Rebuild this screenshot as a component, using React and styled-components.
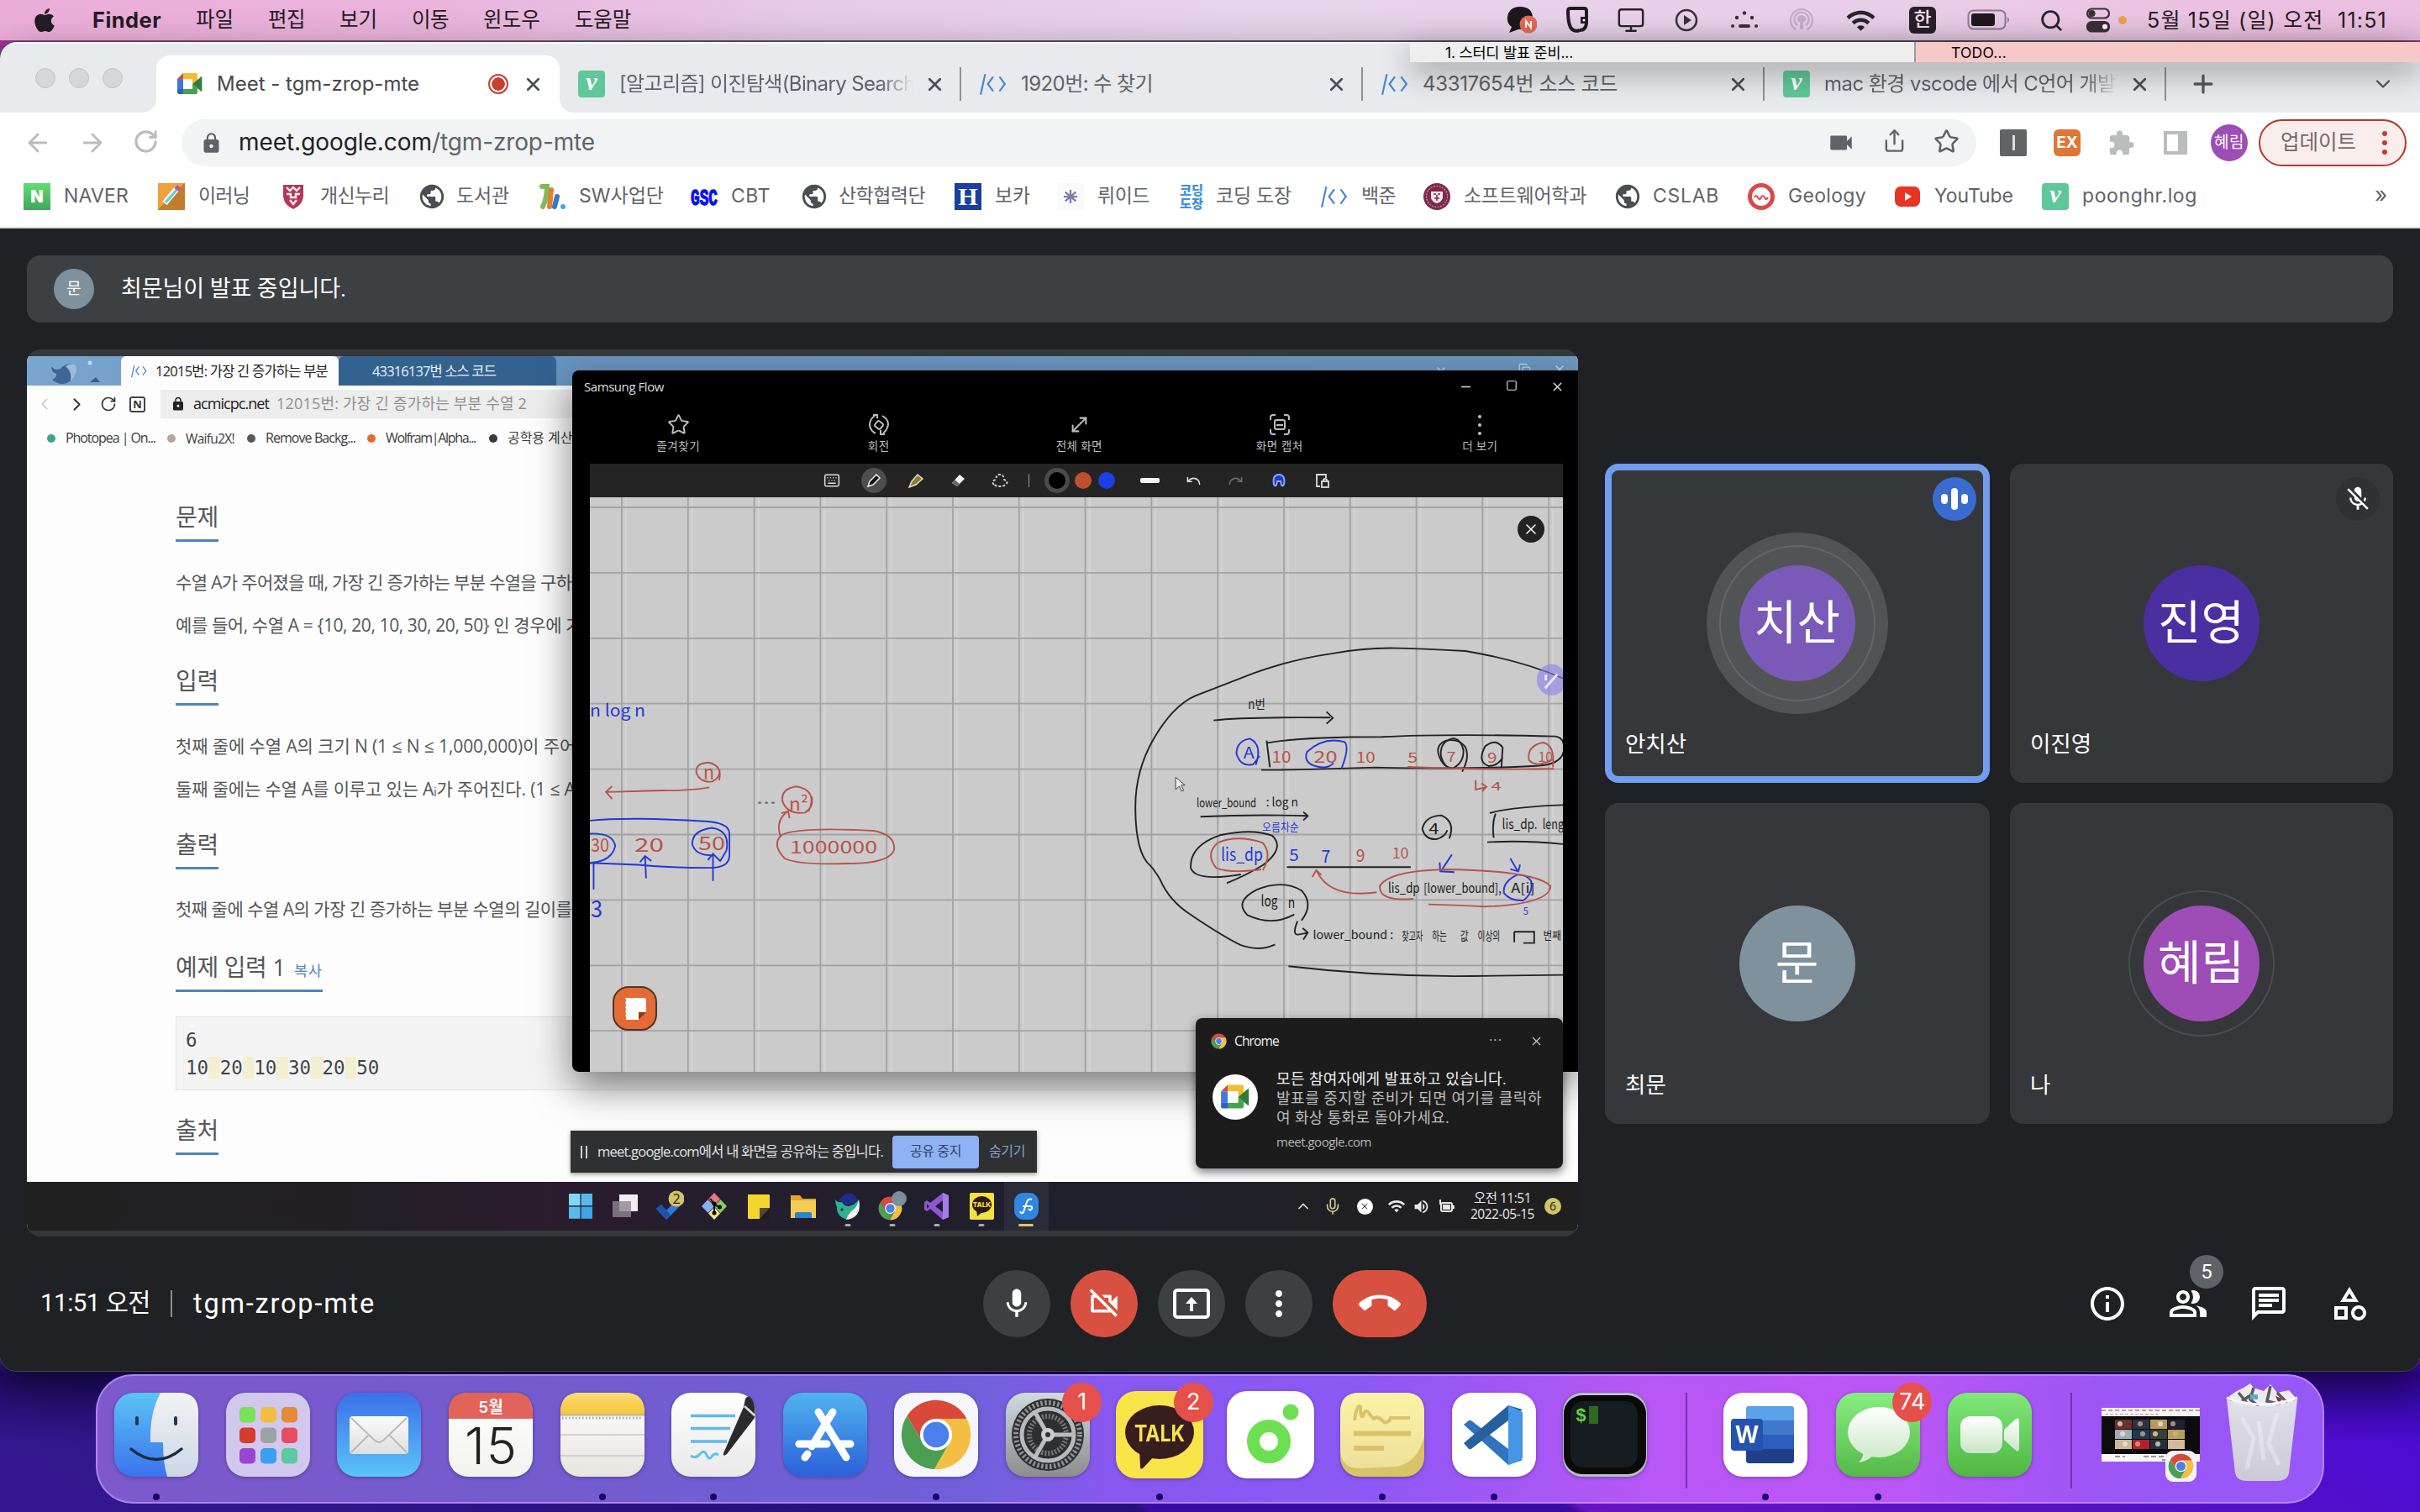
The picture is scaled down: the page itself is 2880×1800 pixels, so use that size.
import React, { useLayoutEffect, useRef, useState } from "react";
import styled, { createGlobalStyle, css } from "styled-components";
import { FaApple } from "react-icons/fa";
import {
  MdMic, MdMicOff, MdOutlineVideocamOff, MdMoreVert, MdCallEnd, MdInfoOutline, MdOutlinePeopleAlt,
  MdOutlineChat, MdOutlineCategory, MdPublic, MdExtension, MdVideocam, MdLock, MdWifi, MdVolumeUp,
} from "react-icons/md";
import {
  ArrowLeft, ArrowRight, RotateCw, Share, Star, Plus, X, ChevronDown, ChevronUp, Search, Monitor,
  ChevronLeft, ChevronRight, Minus, Square, Undo, Redo, Keyboard, Mic, MoveDiagonal, Copy,
} from "lucide-react";

const MAC = `Inter, "Noto Sans CJK KR", sans-serif`;
const MEET = `Roboto, "Noto Sans CJK KR", sans-serif`;
const WIN = `"Open Sans", "Noto Sans CJK KR", sans-serif`;

const Global = createGlobalStyle`
  * { box-sizing: border-box; }
  body { margin: 0; background: #2b1580; font-family: ${MAC}; }
  svg { display: block; flex: none; }
`;

/* ---------- text that keeps a given width by adjusting its tracking ---------- */

const Line = styled.span`
  display: block;
  flex: none;
  white-space: pre;
  line-height: 1.2;
  font-size: ${(p) => p.$s || 24}px;
  font-weight: ${(p) => p.$b || 400};
  color: ${(p) => p.$c || "inherit"};
`;

function Label({ w, s, b, c, children }) {
  const ref = useRef(null);
  const [track, setTrack] = useState(0);
  useLayoutEffect(() => {
    const el = ref.current;
    if (!w || !el) return;
    el.style.letterSpacing = "0px";
    const range = document.createRange();
    range.selectNodeContents(el);
    const natural = range.getBoundingClientRect().width;
    const next = (w - natural) / Math.max(1, el.textContent.length);
    el.style.letterSpacing = `${next}px`;
    setTrack(next);
  }, [w, s]);
  return (
    <Line ref={ref} $s={s} $b={b} $c={c} style={{ width: w, letterSpacing: track }}>
      {children}
    </Line>
  );
}

/* ---------- desktop ---------- */

const Desktop = styled.main`
  position: relative;
  width: 2880px;
  height: 1800px;
  overflow: hidden;
  display: flex;
  flex-direction: column;
  background:
    linear-gradient(180deg, transparent 0 1620px, rgba(10, 0, 50, 0.45) 1634px, transparent 1720px),
    linear-gradient(90deg, #a03098 0 60px, #a03098 60px, #a04058 640px, #5b5b66 700px, #4a4a55 2580px, #7b2a68 2640px, #a02c70 2880px) 0 0 / 100% 80px no-repeat,
    linear-gradient(33.7deg, #341790 0 2%, #26117a 18%, #26117a 24.4%, #3a0da0 24.6%, #3a0da0 33.6%, #6814c0 33.9%, #5612c0 45%, #4a0cd6 55%);
`;

const MenuBar = styled.header`
  height: 48px;
  flex: none;
  display: flex;
  align-items: center;
  justify-content: space-between;
  padding: 0 39px 0 40px;
  color: #241c24;
  background: linear-gradient(90deg, #ecaed9 0, #eab3dc 500px, #e6cae6 950px, #e6d5ea 1500px, #e8d0e8 2200px, #ecc0e0 2700px, #ebbfdf 2880px);
`;
const MenuLeft = styled.div`
  display: flex;
  align-items: center;
  gap: 41px;
  margin-left: -3px;
`;
const MenuRight = styled.div`
  display: flex;
  align-items: center;
`;
const StatusCell = styled.div`
  width: ${(p) => p.$w}px;
  padding-right: ${(p) => p.$pr || 0}px;
  display: flex;
  align-items: center;
  justify-content: center;
  color: #2b232b;
`;
const InputSource = styled.div`
  width: 32px;
  height: 32px;
  border-radius: 6px;
  background: #2a202a;
  color: #f3dff0;
  display: grid;
  place-items: center;
`;

/* ---------- sticky notes above the window ---------- */

const Notes = styled.div`
  position: absolute;
  z-index: 3;
  top: 50px;
  right: 0;
  display: flex;
  gap: 2px;
  background: #9a9a9a;
  box-shadow: 0 12px 36px rgba(0, 0, 0, 0.36);
`;
const Note = styled.div`
  width: 600px;
  height: 24px;
  display: flex;
  align-items: center;
  padding-left: 42px;
  color: #000;
  background: ${(p) => p.$c};
`;

/* ---------- browser ---------- */

const BrowserWindow = styled.section`
  margin-top: 2px;
  height: 1582px;
  flex: none;
  display: flex;
  flex-direction: column;
  border-radius: 20px;
  overflow: hidden;
  background: #202124;
  box-shadow: 0 0 0 1px #444, 0 18px 50px rgba(0, 0, 0, 0.5);
`;
const TabStrip = styled.div`
  height: 84px;
  flex: none;
  display: flex;
  align-items: flex-end;
  background: #e8eaed;
  border-top: 2px solid #f6f7f8;
`;
const Lights = styled.div`
  width: 186px;
  height: 68px;
  flex: none;
  display: flex;
  gap: 16px;
  padding: 15px 0 0 42px;
  i {
    width: 24px;
    height: 24px;
    border-radius: 50%;
    background: #d6d7d9;
    border: 1px solid #c2c3c5;
  }
`;
const Tab = styled.div`
  position: relative;
  width: ${(p) => (p.$active ? 480 : 478)}px;
  height: 68px;
  flex: none;
  display: flex;
  align-items: center;
  padding-left: ${(p) => (p.$active ? 24 : 22)}px;
  color: ${(p) => (p.$active ? "#46494d" : "#5f6368")};
  ${(p) => p.$active && css`
    background: #fff;
    border-radius: 16px 16px 0 0;
    &::before, &::after {
      content: "";
      position: absolute;
      bottom: 0;
      width: 16px;
      height: 16px;
    }
    &::before { left: -16px; background: radial-gradient(circle at 0 0, transparent 15.5px, #fff 16px); }
    &::after { right: -16px; background: radial-gradient(circle at 100% 0, transparent 15.5px, #fff 16px); }
  `}
`;
const TabTitle = styled.div`
  flex: 1;
  margin-left: ${(p) => p.$gap || 17}px;
  overflow: hidden;
  ${(p) => p.$fade && css`mask-image: linear-gradient(90deg, #000 310px, transparent 350px);`}
`;
const RecordDot = styled.div`
  width: 24px;
  height: 24px;
  margin-right: 4px;
  border-radius: 50%;
  border: 2px solid #c9402f;
  background: radial-gradient(circle, #c9402f 7.5px, #fff 8px);
`;
const TabClose = styled.div`
  width: 30px;
  margin: 0 ${(p) => (p.$last ? 17 : 15)}px 0 10px;
  display: grid;
  place-items: center;
  color: #4b4e52;
`;
const TabRule = styled.i`
  width: 2px;
  height: 40px;
  background: #8f9296;
`;
const TabTools = styled.div`
  flex: 1;
  height: 68px;
  display: flex;
  align-items: center;
  justify-content: space-between;
  padding: 0 30px 0 27px;
  color: #55585c;
`;
const VelogTile = styled.div`
  width: 32px;
  height: 32px;
  border-radius: 4px;
  background: #5fc79a;
  color: #fff;
  font: italic bold 30px/26px "Liberation Serif", serif;
  text-align: center;
`;

const ToolbarRow = styled.div`
  height: 70px;
  flex: none;
  display: flex;
  align-items: center;
  padding: 2px 16px 0 28px;
  background: #fff;
`;
const NavButtons = styled.div`
  width: 188px;
  display: flex;
  gap: 31px;
  color: #babcbe;
`;
const Omnibox = styled.div`
  width: 2136px;
  height: 56px;
  display: flex;
  align-items: center;
  padding: 0 20px 0 22px;
  border-radius: 28px;
  background: #f1f3f4;
  color: #5f6368;
`;
const Url = styled.div`
  display: flex;
  flex: 1;
  margin-left: 19px;
`;
const OmniIcons = styled.div`
  display: flex;
  gap: 32px;
`;
const Extensions = styled.div`
  display: flex;
  align-items: center;
  gap: 32px;
  margin-left: 28px;
`;
const ExtTile = styled.div`
  width: 32px;
  height: 32px;
  border-radius: ${(p) => p.$r || 2}px;
  background: ${(p) => p.$c};
  color: #fff;
  display: grid;
  place-items: center;
`;
const ExtCaret = styled.i`
  width: 3px;
  height: 18px;
  background: #ddd;
`;
const SidePanel = styled.div`
  width: 28px;
  height: 28px;
  margin: 0 2px;
  border: 4px solid #babcbe;
  border-right-width: 11px;
`;
const Profile = styled.div`
  width: 44px;
  height: 44px;
  margin: 0 -6px;
  border-radius: 50%;
  background: #9d4db5;
  color: #fff;
  display: grid;
  place-items: center;
`;
const UpdateButton = styled.div`
  width: 176px;
  height: 56px;
  margin-left: 19px;
  flex: none;
  display: flex;
  align-items: center;
  justify-content: space-between;
  padding: 0 13px 0 24px;
  border: 2px solid #b5372c;
  border-radius: 28px;
  background: #faeeed;
  color: #75686a;
`;
const Kebab = styled.div`
  height: 27px;
  display: grid;
  align-content: center;
  gap: ${(p) => p.$gap || 6}px;
  padding-right: ${(p) => p.$pr || 0}px;
  i {
    width: ${(p) => p.$d || 5}px;
    height: ${(p) => p.$d || 5}px;
    border-radius: 50%;
    background: ${(p) => p.$c};
  }
`;

const BookmarkBar = styled.nav`
  height: 68px;
  flex: none;
  display: flex;
  align-items: flex-start;
  padding: 12px 0 0 28px;
  background: #fff;
  border-bottom: 2px solid #d9dbdd;
  color: #5f6368;
`;
const Bookmark = styled.div`
  width: ${(p) => p.$w}px;
  height: 36px;
  display: flex;
  align-items: center;
  gap: ${(p) => p.$gap || 16}px;
`;
const Square32 = styled.div`
  width: 32px;
  height: 32px;
  background: ${(p) => p.$bg};
  color: ${(p) => p.$c || "#fff"};
  display: grid;
  place-items: center;
  font: ${(p) => p.$f || "900 20px/1 Inter, sans-serif"};
`;

/* ---------- meet ---------- */

const Meet = styled.div`
  flex: 1;
  display: flex;
  flex-direction: column;
  padding: 32px 32px 0;
  background: #202124;
  color: #fff;
  font-family: ${MEET};
`;
const Banner = styled.div`
  height: 80px;
  flex: none;
  display: flex;
  align-items: center;
  gap: 32px;
  padding-left: 32px;
  border-radius: 16px;
  background: #3c4043;
`;
const SmallAvatar = styled.div`
  width: 48px;
  height: 48px;
  border-radius: 50%;
  background: #7f919d;
  display: grid;
  place-items: center;
`;
const Stage = styled.div`
  height: 1056px;
  flex: none;
  margin-top: 32px;
  display: flex;
  gap: 32px;
`;
const Presentation = styled.div`
  width: 1846px;
  height: 1056px;
  flex: none;
  padding: 8px 0 7px;
  border-radius: 16px;
  overflow: hidden;
  background: #36373a;
`;
const People = styled.div`
  flex: 1;
  display: grid;
  grid-template-columns: 458px 456px;
  grid-template-rows: 380px 382px;
  gap: 24px;
  padding-top: 136px;
`;
const PersonTile = styled.div`
  position: relative;
  display: grid;
  place-items: center;
  border-radius: 16px;
  background: #36373a;
  box-shadow: ${(p) => (p.$speaking ? "inset 0 0 0 8px #729cef" : "none")};
`;
const Halo = styled.div`
  width: 216px;
  height: 216px;
  border-radius: 50%;
  display: grid;
  place-items: center;
  background: ${(p) => (p.$fill ? "#525355" : "transparent")};
`;
const Ring = styled.div`
  width: ${(p) => p.$d}px;
  height: ${(p) => p.$d}px;
  border-radius: 50%;
  display: grid;
  place-items: center;
  border: 2px solid ${(p) => p.$c};
`;
const Avatar = styled.div`
  width: 138px;
  height: 138px;
  padding: 2px 1px 0 0;
  border-radius: 50%;
  display: grid;
  place-items: center;
  background: ${(p) => p.$c};
`;
const PersonName = styled.div`
  position: absolute;
  left: 24px;
  bottom: 30px;
`;
const CornerBadge = styled.div`
  position: absolute;
  top: 16px;
  right: 16px;
  width: 52px;
  height: 52px;
  border-radius: 50%;
  display: flex;
  align-items: center;
  justify-content: center;
  gap: 4px;
  background: ${(p) => p.$c};
`;
const Bar = styled.i`
  width: 8px;
  height: ${(p) => p.$h}px;
  border-radius: 4px;
  background: #fff;
`;
const ControlBar = styled.footer`
  height: 160px;
  flex: none;
  display: grid;
  grid-template-columns: 1138px 1fr auto;
  align-items: center;
  padding: 0 28px 0 0;
`;
const CallTitle = styled.div`
  display: flex;
  align-items: center;
  padding-left: 16px;
  i { width: 2px; height: 32px; margin: 0 25px 0 24px; background: #8a8c8f; }
`;
const Controls = styled.div`
  display: flex;
  gap: 24px;
`;
const RoundButton = styled.div`
  width: ${(p) => (p.$wide ? 112 : 80)}px;
  height: 80px;
  border-radius: 40px;
  display: grid;
  place-items: center;
  background: ${(p) => (p.$danger ? "#d85140" : "#3c4043")};
`;
const PanelButtons = styled.div`
  display: flex;
  gap: 48px;
`;
const PanelButton = styled.div`
  position: relative;
  width: 48px;
  height: 48px;
`;
const CountBadge = styled.div`
  position: absolute;
  left: 26px;
  top: -34px;
  width: 40px;
  height: 40px;
  border-radius: 50%;
  background: #5f6368;
  display: grid;
  place-items: center;
`;

/* ---------- shared Windows screen ---------- */

const Shared = styled.div`
  position: relative;
  width: 1846px;
  height: 1041px;
  display: flex;
  flex-direction: column;
  overflow: hidden;
  background: #fdfdfd;
  color: #3c3c3c;
  font-family: ${WIN};
`;
const WhaleTabs = styled.div`
  height: 35px;
  display: flex;
  background: linear-gradient(90deg, #79a5cf, #6794bf 30%, #6c98c1);
`;
const WhaleLogo = styled.div`
  width: 112px;
  padding: 4px 0 0 22px;
`;
const WhaleTab = styled.div`
  width: 259px;
  display: flex;
  align-items: center;
  justify-content: ${(p) => (p.$on ? "flex-start" : "center")};
  gap: 10px;
  padding-left: ${(p) => (p.$on ? 12 : 0)}px;
  padding-right: ${(p) => (p.$on ? 0 : 32)}px;
  border-radius: 6px 6px 0 0;
  background: ${(p) => (p.$on ? "#fdfdfd" : "#34628f")};
  color: ${(p) => (p.$on ? "#222" : "#e8eff6")};
`;
const WhaleControls = styled.div`
  flex: 1;
  display: flex;
  justify-content: flex-end;
  align-items: flex-start;
  padding: 8px 14px 0 0;
  color: #c6d8ea;
  svg:first-child { margin-right: 84px; }
  svg:last-child { margin-left: 26px; }
`;
const WhaleBar = styled.div`
  height: 44px;
  display: flex;
  align-items: center;
  gap: 15px;
  padding-left: 10px;
  color: #333;
`;
const WhaleUrl = styled.div`
  flex: 1;
  height: 34px;
  margin-left: 3px;
  padding-left: 12px;
  display: flex;
  align-items: center;
  gap: 9px;
  background: #ededed;
`;
const NBox = styled.div`
  width: 19px;
  height: 19px;
  border: 2px solid #444;
  border-radius: 3px;
  display: grid;
  place-items: center;
`;
const WhaleMarks = styled.div`
  height: 38px;
  display: flex;
  align-items: center;
  padding-left: 24px;
`;
const WhaleMark = styled.div`
  width: ${(p) => p.$w}px;
  flex: none;
  display: flex;
  align-items: center;
  gap: 12px;
  i { width: 10px; height: 10px; border-radius: 50%; background: ${(p) => p.$c}; }
`;
const Article = styled.article`
  flex: 1;
  display: flex;
  flex-direction: column;
  align-items: flex-start;
  padding-left: 177px;
  color: #55575a;
`;
const Heading = styled.h2`
  height: 46px;
  margin: ${(p) => p.$mt}px 0 0;
  display: flex;
  align-items: baseline;
  gap: 10px;
  border-bottom: 3px solid #4a86bf;
`;
const Para = styled.p`
  height: 40px;
  margin: ${(p) => p.$mt}px 0 0;
  display: flex;
  align-items: center;
`;
const Sample = styled.div`
  width: 1640px;
  height: 88px;
  margin-top: 29px;
  padding: 11px 0 0 11px;
  background: #f4f4f5;
  border: 1px solid #e6e3e3;
  color: #444;
  font: 22.5px/33px "DejaVu Sans Mono", monospace;
  div { height: 33px; white-space: pre; }
  mark { background: #f3efcf; color: inherit; }
`;
const WinTaskbar = styled.div`
  height: 58px;
  flex: none;
  display: flex;
  align-items: center;
  justify-content: space-between;
  padding: 0 18px 0 632px;
  color: #fff;
  background: linear-gradient(90deg, #202020 0, #211f24 380px, #2b1c2e 620px, #251e2c 800px, #201f2b 1100px, #1f202c 1300px, #202022 1600px, #1f1f20);
`;
const TaskIcons = styled.div`
  display: flex;
  height: 58px;
`;
const TaskIcon = styled.div`
  position: relative;
  width: 53.1px;
  height: 58px;
  display: grid;
  place-items: center;
  background: ${(p) => (p.$on ? "#2b2b3a" : "transparent")};
  &::after {
    content: "";
    position: absolute;
    bottom: 5px;
    left: 50%;
    width: ${(p) => (p.$run ? (p.$on ? 18 : 7) : 0)}px;
    height: 3px;
    transform: translateX(-50%);
    border-radius: 2px;
    background: ${(p) => (p.$on ? "#d6cb60" : "#a9a9ad")};
  }
`;
const Tray = styled.div`
  display: flex;
  align-items: center;
`;
const TrayCell = styled.div`
  width: ${(p) => p.$w}px;
  display: grid;
  place-items: center;
  color: ${(p) => p.$c || "#e8e8e8"};
`;
const Dot = styled.div`
  width: ${(p) => p.$d}px;
  height: ${(p) => p.$d}px;
  border-radius: 50%;
  background: ${(p) => p.$c};
  border: ${(p) => p.$border || "none"};
  color: #222;
  display: grid;
  place-items: center;
`;

/* Samsung Flow window */
const FlowShadow = styled.div`
  position: absolute;
  left: 649px;
  top: 17px;
  width: 1197px;
  height: 835px;
  border-radius: 8px;
  box-shadow: 0 18px 46px rgba(0, 0, 0, 0.5);
`;
const FlowWindow = styled.div`
  position: absolute;
  left: 649px;
  top: 17px;
  width: 1197px;
  height: 835px;
  display: flex;
  flex-direction: column;
  padding: 0 18px 0 21px;
  overflow: hidden;
  border-radius: 8px 0 0 8px;
  background: #000;
  color: #ddd;
`;
const FlowTitle = styled.div`
  height: 38px;
  margin: 0 -2px 0 -7px;
  display: flex;
  align-items: center;
  justify-content: space-between;
`;
const FlowWinButtons = styled.div`
  display: flex;
  gap: 39px;
`;
const FlowActions = styled.div`
  height: 73px;
  display: flex;
`;
const FlowAction = styled.div`
  width: 238.5px;
  flex: none;
  display: flex;
  flex-direction: column;
  align-items: center;
  gap: 4px;
  padding-top: 13px;
  color: #bdbdbd;
  &:first-child { margin-left: -14px; }
`;
const InkBar = styled.div`
  height: 40px;
  flex: none;
  display: flex;
  align-items: center;
  padding-left: 263px;
  background: #242424;
  color: #e0e0e0;
`;
const InkCell = styled.div`
  width: ${(p) => p.$w || 50}px;
  height: 32px;
  display: grid;
  place-items: center;
  justify-content: center;
  color: ${(p) => p.$c || "#e0e0e0"};
`;
const InkRule = styled.i`
  width: 1px;
  height: 16px;
  background: #999;
`;
const InkStroke = styled.i`
  width: 23px;
  height: 6px;
  border-radius: 2px;
  background: #f4f4f4;
`;
const Canvas = styled.div`
  position: relative;
  flex: 1;
  background: #cbcbcb;
`;
const CloseBubble = styled.div`
  position: absolute;
  right: 22px;
  top: 22px;
  width: 32px;
  height: 32px;
  border-radius: 50%;
  background: #232323;
  color: #fff;
  display: grid;
  place-items: center;
`;
const NotesBubble = styled.div`
  position: absolute;
  left: 27px;
  top: 582px;
  width: 53px;
  height: 53px;
  border-radius: 19px;
  border: 2px solid #4d3823;
  background: #e36b36;
  display: grid;
  place-items: center;
`;

/* overlay bars */
const ShareBar = styled.div`
  position: absolute;
  left: 647px;
  top: 922px;
  width: 555px;
  height: 50px;
  display: flex;
  align-items: center;
  padding: 0 14px 0 12px;
  background: #2f3032;
  color: #e2e2e2;
  box-shadow: 0 2px 5px rgba(0, 0, 0, 0.4);
`;
const PauseMark = styled.i`
  width: 8px;
  height: 15px;
  margin-right: 12px;
  border: solid #d0d0d0;
  border-width: 0 2px;
`;
const StopButton = styled.div`
  width: 104px;
  height: 39px;
  margin: 0 12px 0 11px;
  border-radius: 4px;
  display: grid;
  place-items: center;
  background: #8fb2f3;
  color: #2e4472;
`;
const Toast = styled.div`
  position: absolute;
  left: 1391px;
  top: 788px;
  width: 437px;
  height: 179px;
  display: flex;
  flex-direction: column;
  padding: 14px 23px 0 18px;
  border-radius: 8px;
  background: #1c1c1c;
  color: #f0f0f0;
  box-shadow: 0 4px 12px rgba(0, 0, 0, 0.55);
`;
const ToastHead = styled.div`
  height: 26px;
  display: flex;
  align-items: center;
  gap: 9px;
`;
const ToastActions = styled.div`
  flex: 1;
  display: flex;
  align-items: center;
  justify-content: flex-end;
  gap: 32px;
`;
const ToastBody = styled.div`
  display: flex;
  gap: 22px;
  margin-top: 21px;
`;
const ToastLogo = styled.div`
  width: 54px;
  height: 54px;
  margin: 6px 0 0 2px;
  border-radius: 50%;
  background: #fff;
  display: grid;
  place-items: center;
`;
const ToastText = styled.div`
  display: flex;
  flex-direction: column;
  div { height: 23px; display: flex; align-items: center; }
  div:last-child { margin-top: 5px; }
`;

/* ---------- dock ---------- */

const Dock = styled.div`
  position: absolute;
  left: 114px;
  top: 1636px;
  width: 2652px;
  height: 154px;
  display: flex;
  padding: 20px 0 0 20px;
  border-radius: 44px;
  border: 2px solid rgba(210, 170, 255, 0.55);
  background: linear-gradient(90deg, #7d59cc 0, #735bcd 500px, #7060da 1050px, #8858f0 1200px, #8b58f4 1500px, #b857f5 1850px, #ba56f6 2150px, #9a56f6 2400px, #9658f7 2650px);
`;
const DockItem = styled.div`
  position: relative;
  width: 100px;
  height: 130px;
  margin-right: ${(p) => p.$mr ?? 32.65}px;
  flex: none;
  &::after {
    content: "";
    position: absolute;
    left: 46px;
    top: 120px;
    width: 8px;
    height: 8px;
    border-radius: 50%;
    background: ${(p) => (p.$open ? "#1c0268" : "transparent")};
  }
  > svg { overflow: visible; filter: drop-shadow(0 1px 2px rgba(0, 0, 0, 0.3)); }
`;
const DockRule = styled.i`
  width: 2px;
  height: 114px;
  margin-right: ${(p) => p.$mr}px;
  background: rgba(80, 20, 150, 0.6);
`;
const DockBadge = styled.div`
  position: absolute;
  right: -14px;
  top: -12px;
  width: 47px;
  height: 47px;
  border-radius: 50%;
  background: #e6504a;
  color: #fff;
  display: grid;
  place-items: center;
`;
const Thumb = styled.div`
  width: 117px;
  height: 100px;
  padding-top: 18px;
  margin: 0 30px 0 35px;
`;

/* ---------- drawings ---------- */

function ChromeLogo({ size }) {
  const d = "M24 14H43.6A22 22 0 0 0 5.54 12.03L15.34 29L24 24Z";
  return (
    <svg width={size} height={size} viewBox="1 1 46 46">
      <path d={d} fill="#d9493a" />
      <path d={d} fill="#f3bf42" transform="rotate(120 24 24)" />
      <path d={d} fill="#4c9e52" transform="rotate(240 24 24)" />
      <circle cx="24" cy="24" r="10.2" fill="#fff" />
      <circle cx="24" cy="24" r="8.2" fill="#4a80ec" />
    </svg>
  );
}
function MeetLogo({ size }) {
  return (
    <svg width={size} height={size} viewBox="0 0 32 32">
      <path d="M1 10L8 3V10Z" fill="#d9493a" />
      <path d="M8 3H23a2 2 0 0 1 2 2V12l-6 4V10H8Z" fill="#f3bb2f" />
      <path d="M1 10H8V22H1Z" fill="#4077e3" />
      <path d="M1 22H8V28H3a2 2 0 0 1-2-2Z" fill="#2c5fc4" />
      <path d="M8 22H19V16l6 5V26a2 2 0 0 1-2 2H8Z" fill="#46a350" />
      <path d="M8 10H19V22H8Z" fill="#fff" />
      <path d="M25 11L29 7.500a.8.8 0 0 1 1.400.6V23.900a.8.8 0 0 1-1.400.6L25 21L19 16Z" fill="#2f7d3a" />
    </svg>
  );
}
const CodeMark = ({ size = 30 }) => (
  <svg width={size} height={size} viewBox="0 0 30 30" fill="none" stroke="#4a86cc" strokeWidth="2">
    <path d="M6 4L1 27M15 7L9 15L15 23M22 7L28 15L22 23" />
  </svg>
);

const bookmarks = [
  { t: "NAVER", w: 77, p: 160, i: <Square32 $bg="linear-gradient(#5ee070,#43a35f)">N</Square32> },
  { t: "이러닝", w: 61, p: 145, i: (
    <Square32 $bg="linear-gradient(135deg,#f0a03c 50%,#c07d2c 50%)">
      <svg width="28" height="28" viewBox="0 0 28 28"><path d="M6 22L20 5" stroke="#e8fbff" strokeWidth="7" /><path d="M7 21L21 5" stroke="#6fc7d9" strokeWidth="3" /><path d="M20 6l3-4" stroke="#a55bb5" strokeWidth="6" /></svg>
    </Square32>) },
  { t: "개신누리", w: 82, p: 164, i: (
    <svg width="32" height="32" viewBox="0 0 32 32"><path d="M4 2H28V16Q27 26 16 31Q5 26 4 16Z" fill="#b2375a" /><path d="M8 5l4 4 4-4 4 4 4-4M8 13h5v4h6v-4h5M12 20l4 5 4-5" stroke="#fbe9ee" strokeWidth="2.400" fill="none" /></svg>) },
  { t: "도서관", w: 63, p: 144, i: <MdPublic size={34} color="#4a4d52" />, g: 12 },
  { t: "SW사업단", w: 101, p: 181, i: (
    <svg width="32" height="32" viewBox="0 0 32 32" strokeLinecap="round" strokeWidth="6"><path d="M4 4h6q0 14-5 24" stroke="#7fbc55" fill="none" /><path d="M15 8l-2 20" stroke="#e57e35" /><path d="M22 16l-3 12" stroke="#3b78c2" /><circle cx="29" cy="28" r="3" fill="#43a6e0" /></svg>) },
  { t: "CBT", w: 47, p: 130, i: (
    <svg width="32" height="32" viewBox="0 0 32 32"><text transform="translate(0 26) scale(1 1.700)" fontSize="16" fontWeight="700" fontFamily="'Liberation Mono', monospace" fill="#0b12ee" stroke="#0b12ee" strokeWidth=".8" textLength="32" lengthAdjust="spacingAndGlyphs">GSC</text></svg>) },
  { t: "산학협력단", w: 103, p: 184, i: <MdPublic size={34} color="#4a4d52" />, g: 12 },
  { t: "보카", w: 42, p: 122, i: <Square32 $bg="#1b3f9e" $f="bold 30px/1 'Liberation Serif', serif">H</Square32> },
  { t: "뤼이드", w: 62, p: 144, i: (
    <Square32 $bg="#fafafd"><svg width="18" height="18" viewBox="0 0 20 20" stroke="#7a80aa" strokeWidth="2.500"><path d="M10 1V19M3 4L17 16M3 16L17 4M1 10H19" /></svg></Square32>) },
  { t: "코딩 도장", w: 90, p: 170, i: (
    <svg width="32" height="32" viewBox="0 0 32 32" fontSize="15" fontWeight="900" fontFamily="'Noto Sans CJK KR', sans-serif" fill="#3f93d8"><text x="2" y="14" textLength="28" lengthAdjust="spacingAndGlyphs">코딩</text><text x="2" y="30" textLength="28" lengthAdjust="spacingAndGlyphs">도장</text></svg>), g: 13 },
  { t: "백준", w: 41, p: 122, i: <CodeMark size={32} /> },
  { t: "소프트웨어학과", w: 146, p: 226, i: (
    <svg width="32" height="32" viewBox="0 0 32 32"><circle cx="16" cy="16" r="16" fill="#7d2a4b" /><circle cx="16" cy="16" r="12.500" fill="none" stroke="#c793a7" strokeWidth="1.200" strokeDasharray="2 1.400" /><path d="M9 10h14v8q-2 5-7 6q-5-1-7-6Z" fill="#f6e8ee" /><path d="M12 13h3M17 13h3M13 18h6M16 14v7" stroke="#7d2a4b" strokeWidth="1.600" /></svg>) },
  { t: "CSLAB", w: 79, p: 160, i: <MdPublic size={34} color="#4a4d52" />, g: 13 },
  { t: "Geology", w: 93, p: 174, i: (
    <svg width="32" height="32" viewBox="0 0 32 32"><circle cx="16" cy="16" r="13.500" fill="#fff" stroke="#dc4747" strokeWidth="5" /><path d="M8 17q2-4 4 0t4 0t4 0t4 0" stroke="#dc4747" strokeWidth="2" fill="none" /></svg>) },
  { t: "YouTube", w: 94, p: 176, i: (
    <svg width="32" height="32" viewBox="0 0 32 32"><rect x="1" y="4" width="30" height="24" rx="7" fill="#e93323" /><path d="M13 11V21L21 16Z" fill="#fff" /></svg>) },
  { t: "poonghr.log", w: 137, p: 396, i: <VelogTile>v</VelogTile> },
];

/* Handwriting on the shared note; coordinates follow the page of the note. */
const hand = `"Noto Sans CJK KR", sans-serif`;
function Ink({ x, y, w, s, c = "#1c1c1c", children }) {
  return (
    <text x={x} y={y} fontSize={s} fill={c} textLength={w} lengthAdjust="spacingAndGlyphs" fontFamily={hand}>
      {children}
    </text>
  );
}
const Stroke = (props) => <path vectorEffect="non-scaling-stroke" {...props} />;
const BLUE = "#2338d6";
const RED = "#b9534b";
function NotePage() {
  const vs = Array.from({ length: 15 }, (_, i) => 740 + i * 78.8);
  const hs = Array.from({ length: 9 }, (_, i) => 604 + i * 77.9);
  return (
    <svg width="1158" height="684" viewBox="702 592 1158 684">
      <g stroke="#d3d3d3" strokeWidth="2">
        {vs.map((v) => <path key={v} d={`M${v + 5} 592V1276`} />)}
      </g>
      <g stroke="#a3a3a3" strokeWidth="1.800">
        {vs.map((v) => <path key={v} d={`M${v} 592V1276`} />)}
        {hs.map((h) => <path key={h} d={`M702 ${h}H1860`} />)}
      </g>
      <g transform="translate(0 900) scale(.6122 .3699)" fill="none" strokeWidth="1.900">
        <g stroke={RED}>
          <Stroke d="M1398 78Q1405 30 1377 21Q1350 24 1354 56Q1362 88 1385 82Q1400 70 1399 45" />
          <Stroke d="M1379 101Q1340 112 1290 111L1180 116M1190 97L1178 116L1190 138" />
          <Stroke d="M1572 178Q1590 110 1548 98Q1518 105 1521 145Q1530 190 1565 182Q1582 165 1578 130" />
          <Stroke d="M1518 262Q1506 210 1530 180M1519 184L1532 178L1535 200" />
        </g>
        <g stroke={BLUE}>
          <Stroke d="M1146 208Q1220 195 1370 210Q1418 214 1418 250V320Q1418 360 1380 360Q1300 360 1240 350L1146 344" />
          <Stroke d="M1146 250Q1192 246 1196 290Q1190 338 1146 345" />
          <Stroke d="M1412 305Q1420 240 1384 231Q1344 240 1346 285Q1352 320 1386 320" />
          <Stroke d="M1154 340V430M1256 394L1254 325M1244 342L1254 322L1266 338M1386 402V318M1376 335L1386 315L1400 338L1412 305" />
        </g>
      </g>
      <Ink x="702" y="853" w="66" s="20" c={BLUE}>n log n</Ink>
      <Ink x="837" y="928" w="13" s="23" c={RED}>n</Ink>
      <Ink x="703" y="1014" w="22" s="22" c={RED}>30</Ink>
      <Ink x="755" y="1014" w="35" s="22" c={RED}>20</Ink>
      <Ink x="831" y="1012" w="32" s="22" c={RED}>50</Ink>
      <Ink x="703" y="1092" w="14" s="28" c={BLUE}>3</Ink>
      <Ink x="900" y="957" w="24" s="20" c="#777">...</Ink>
      <Ink x="939" y="965" w="23" s="22" c={RED}>n²</Ink>
      <path d="M930 994Q950 984 1040 989Q1066 994 1064 1012Q1058 1028 1010 1028Q950 1030 934 1022Q918 1006 930 994Z" fill="none" stroke={RED} strokeWidth="1.900" />
      <Ink x="940" y="1016" w="104" s="21" c={RED}>1000000</Ink>

      <g transform="translate(1300 740) scale(.3827 .3333)" fill="none" strokeWidth="1.900">
        <g stroke="#222">
          <Stroke d="M1466 204Q1340 140 1160 105Q1040 98 950 95Q850 92 740 115Q620 135 500 185L320 265Q250 300 190 420Q130 540 134 680Q136 810 170 860Q190 880 210 920Q240 1000 310 1050Q400 1120 460 1155Q520 1180 568 1153" />
          <Stroke d="M377 353Q470 340 740 343M728 322L748 344L728 365" />
          <Stroke d="M542 425L552 520M542 434Q640 412 900 412Q1100 400 1440 410Q1470 415 1466 460Q1460 515 1370 516Q1180 528 880 521Q640 530 525 530" />
          <Stroke d="M1118 418Q1080 430 1084 480Q1095 525 1120 525Q1155 505 1154 460Q1145 415 1118 418" />
          <Stroke d="M1150 536Q1176 480 1158 445Q1140 418 1100 425Q1066 440 1078 480Q1090 520 1118 524" />
          <Stroke d="M1272 522L1276 450Q1255 415 1222 445Q1195 500 1232 516Q1260 516 1276 485" />
          <Stroke d="M336 697Q500 688 668 694M656 680L670 694L656 710" />
          <Stroke d="M462 903Q320 930 306 880Q302 800 400 762Q500 738 560 765Q600 810 530 870Q480 905 418 934" />
          <Stroke d="M605 877H990" />
          <Stroke d="M1110 775Q1130 715 1085 692Q1035 695 1026 740Q1035 780 1070 777Q1095 770 1104 745" />
          <Stroke d="M1466 655Q1300 662 1236 684M1254 686Q1242 720 1248 772M1228 788Q1340 780 1466 795" />
          <Stroke d="M650 1068Q690 1010 650 960Q590 920 510 958Q440 1000 482 1048Q560 1090 628 1046" />
          <Stroke d="M638 1070Q620 1120 640 1118L668 1112M654 1095L670 1111L656 1136" />
          <Stroke d="M610 1231Q900 1270 1180 1266L1466 1262M1312 1108V1145M1312 1108H1374V1148H1340" />
        </g>
        <g stroke={BLUE}>
          <Stroke d="M508 512Q530 440 490 418Q450 425 448 470Q460 520 500 510L520 480" />
          <Stroke d="M775 524Q800 450 785 430Q720 410 668 465Q655 500 690 515Q730 530 750 505" />
          <Stroke d="M1118 832L1085 890M1080 860L1082 892L1126 895M1300 846L1322 890M1300 884L1325 892L1330 868" />
          <Stroke d="M1320 905Q1275 930 1280 970Q1300 998 1340 996Q1372 970 1364 925Q1345 900 1320 905" />
        </g>
        <g stroke={RED}>
          <Stroke d="M530 888Q560 830 530 790Q450 760 390 790Q350 830 385 880Q430 900 525 885" />
          <Stroke d="M1432 520Q1440 440 1400 432Q1350 445 1358 495Q1380 525 1435 490M980 519Q1250 530 1435 526M1192 566V600L1222 592M1210 578L1226 590L1212 606" />
          <Stroke d="M884 967Q740 990 698 892M684 912L696 888L712 905" />
          <Stroke d="M998 990Q890 1000 894 945Q920 890 1100 885Q1380 890 1425 945Q1420 1010 1220 1018Q1120 1012 1045 1010" />
        </g>
        <g>
          <Ink x="484" y="312" w="54" s="46">n번</Ink>
          <Ink x="470" y="488" w="34" s="54" c={BLUE}>A</Ink>
          <Ink x="558" y="505" w="60" s="58" c={RED}>10</Ink>
          <Ink x="688" y="505" w="74" s="58" c={RED}>20</Ink>
          <Ink x="820" y="505" w="60" s="54" c={RED}>10</Ink>
          <Ink x="980" y="503" w="32" s="50" c={RED}>5</Ink>
          <Ink x="1102" y="502" w="28" s="50" c={RED}>7</Ink>
          <Ink x="1228" y="504" w="30" s="50" c={RED}>9</Ink>
          <Ink x="1386" y="500" w="46" s="50" c={RED}>10</Ink>
          <Ink x="1240" y="604" w="32" s="42" c={RED}>4</Ink>
          <Ink x="324" y="662" w="186" s="44">lower_bound</Ink>
          <Ink x="540" y="660" w="100" s="44">: log n</Ink>
          <Ink x="528" y="746" w="114" s="38" c={BLUE}>오름차순</Ink>
          <Ink x="400" y="856" w="130" s="64" c={BLUE}>lis_dp</Ink>
          <Ink x="612" y="854" w="30" s="58" c={BLUE}>5</Ink>
          <Ink x="712" y="860" w="28" s="62" c={BLUE}>7</Ink>
          <Ink x="820" y="858" w="28" s="60" c={RED}>9</Ink>
          <Ink x="932" y="846" w="52" s="54" c={RED}>10</Ink>
          <Ink x="1046" y="760" w="32" s="52">4</Ink>
          <Ink x="1274" y="742" w="110" s="50">lis_dp.</Ink>
          <Ink x="1400" y="742" w="66" s="50">leng</Ink>
          <Ink x="920" y="968" w="98" s="50">lis_dp</Ink>
          <Ink x="1030" y="968" w="242" s="46">[lower_bound],</Ink>
          <Ink x="1302" y="970" w="74" s="46">A[i]</Ink>
          <Ink x="1340" y="1046" w="16" s="36" c={BLUE}>5</Ink>
          <Ink x="524" y="1018" w="52" s="54">log</Ink>
          <Ink x="608" y="1022" w="22" s="54">n</Ink>
          <Ink x="686" y="1134" w="250" s="42">lower_bound  :</Ink>
          <Ink x="962" y="1136" w="66" s="40">찾고자</Ink>
          <Ink x="1056" y="1136" w="46" s="40">하는</Ink>
          <Ink x="1144" y="1136" w="26" s="40">값</Ink>
          <Ink x="1198" y="1136" w="70" s="40">이상의</Ink>
          <Ink x="1402" y="1134" w="56" s="38">번째</Ink>
        </g>
        <ellipse cx="1428" cy="208" rx="46" ry="56" fill="#8a80ec" fillOpacity=".6" />
        <Stroke d="M1408 238L1446 188M1410 190V210" stroke="#e8e6fb" strokeWidth="3" />
        <Stroke d="M259 556V600L270 588L278 606L284 603L276 584H288Z" fill="#f2f2f2" stroke="#444" strokeWidth="1" />
      </g>
    </svg>
  );
}

const winIcons = [
  { i: <svg width="28" height="30" viewBox="0 0 28 30"><g fill="#58b9ec"><rect width="13.4" height="14.2" fill="#7fd6f5" /><rect x="14.6" width="13.4" height="14.2" /><rect y="15.6" width="13.4" height="14.2" /><rect x="14.6" y="15.6" width="13.4" height="14.2" fill="#3fa4e6" /></g></svg> },
  { i: <svg width="30" height="28" viewBox="0 0 30 28"><rect x="8" width="22" height="20" fill="#f1edf2" /><rect y="8" width="22" height="19" fill="#8d8790" fillOpacity=".8" /></svg> },
  { i: <svg width="34" height="38" viewBox="0 0 34 38"><path d="M1 22L7 17L13 24L24 12L30 18L13 35Z" fill="#2f78d6" /><path d="M1 22L7 17L18 29L13 35Z" fill="#1d54a8" /><circle cx="25" cy="10" r="9.500" fill="#d3c468" /><text x="25" y="16" fontSize="16" textAnchor="middle" fill="#222" fontFamily="Open Sans">2</text></svg> },
  { i: <svg width="30" height="32" viewBox="0 0 30 32"><path d="M15 0L22 7.500L15 15L8 7.500Z" fill="#ee7480" /><path d="M22.500 8L30 16L22.500 24L15 16Z" fill="#84cf62" /><path d="M7.500 8L15 16L7.500 24L0 16Z" fill="#86b2ee" /><path d="M15 17L22 24.500L15 32L8 24.500Z" fill="#f3e58f" /><path d="M10 7L15 13V24M15 14L21 17" stroke="#111" strokeWidth="2" fill="none" /><circle cx="15" cy="13" r="2.500" /><circle cx="15" cy="24" r="2.500" /><circle cx="21.500" cy="17" r="2.500" /></svg> },
  { i: <svg width="26" height="29" viewBox="0 0 26 29"><rect width="26" height="29" rx="1" fill="#f4d52e" /><path d="M14 29V16H26V29Z" fill="#1f1d22" /><path d="M14 29V16H26Z" fill="#4f4a33" /></svg> },
  { i: <svg width="30" height="30" viewBox="0 0 30 30"><path d="M0 2H11L14 6H30V28H0Z" fill="#e2a52f" /><path d="M0 8H30V29H0Z" fill="#f6cb55" /><path d="M5 29V24q0-2 2-2H23q2 0 2 2V29Z" fill="#2b83d0" /></svg> },
  { run: 1, i: <svg width="30" height="32" viewBox="0 0 30 32"><path d="M4 9Q10-1 20 1Q27 4 26 11L14 15Z" fill="#1b2f8a" /><path d="M0 8Q3 12 8 11Q12 18 19 15Q25 13 28 8Q33 28 14 32Q1 28 2 17Q0 13 0 8Z" fill="#2fae92" /><path d="M28 8Q26 18 19 22Q15 26 13 32Q32 30 28 8Z" fill="#eef4f2" /><circle cx="8" cy="20" r="1.500" fill="#123" /></svg> },
  { run: 1, i: <svg width="34" height="36" viewBox="0 0 34 36"><g transform="translate(0 6)"><ChromeLogo size={29} /></g><circle cx="25" cy="9" r="9" fill="#78909c" /></svg> },
  { run: 1, i: <svg width="30" height="32" viewBox="0 0 30 32"><path d="M22 0L29 3V29L22 32L7 19L3 22L0 20V11L3 9L7 12ZM22 9L13 16L22 23ZM3 13V19L6 16Z" fill="#8c58d2" fillRule="evenodd" /><path d="M22 0L29 3V29L22 32Z" fill="#a67bea" /></svg> },
  { run: 1, i: <svg width="29" height="32" viewBox="0 0 29 32"><rect width="29" height="32" rx="2" fill="#f7e13f" /><ellipse cx="14.500" cy="14" rx="11.500" ry="10" fill="#2d1a12" /><path d="M8 20L9 28L16 22Z" fill="#2d1a12" /><text x="14.500" y="17" fontSize="8" fontWeight="800" textAnchor="middle" fill="#f7e13f" fontFamily="Inter">TALK</text></svg> },
  { run: 1, on: 1, i: <svg width="29" height="32" viewBox="0 0 29 32"><rect width="29" height="32" rx="11" fill="#2f86e0" /><path d="M7 22q1 4 4 1l4-12q2-5 6-3M10 16h9q3 0 2 3q-2 3-4 0" stroke="#fff" strokeWidth="2" fill="none" /></svg> },
];

function SharedScreen() {
  return (
    <Shared>
      <WhaleTabs>
        <WhaleLogo>
          <svg width="80" height="31" viewBox="0 0 80 31"><path d="M7 8Q12 14 18 11Q24 4 33 6Q40 14 32 24Q20 34 8 24Q14 22 13 17Q7 15 7 8Z" fill="#3c6696" /><path d="M24 8Q30 4 36 7Q40 16 30 26Q32 14 24 8Z" fill="#9cbbd8" /><circle cx="53" cy="4" r="2.500" fill="#c4d9ec" /><path d="M53 27l7-6 5 6Z" fill="#345f8f" /></svg>
        </WhaleLogo>
        <WhaleTab $on>
          <CodeMark size={19} />
          <Label s={16.500} w={205}>12015번: 가장 긴 증가하는 부분</Label>
        </WhaleTab>
        <WhaleTab><Label s={16.500} w={147}>43316137번 소스 코드</Label></WhaleTab>
        <WhaleControls><ChevronDown size={16} /><Copy size={15} /><X size={16} /></WhaleControls>
      </WhaleTabs>
      <WhaleBar>
        <ChevronLeft size={22} color="#c2c2c2" strokeWidth={1.600} />
        <ChevronRight size={25} strokeWidth={1.800} />
        <RotateCw size={20} strokeWidth={2} />
        <NBox><Label s={13} b={700}>N</Label></NBox>
        <WhaleUrl>
          <MdLock size={18} color="#222" />
          <Label s={18} w={90} c="#222">acmicpc.net</Label>
          <Label s={18} w={298} c="#909090">12015번: 가장 긴 증가하는 부분 수열 2</Label>
        </WhaleUrl>
      </WhaleBar>
      <WhaleMarks>
        <WhaleMark $w={143} $c="#3aa487"><i /><Label s={16} w={107}>Photopea | On...</Label></WhaleMark>
        <WhaleMark $w={95} $c="#b5a99b"><i /><Label s={15.500} w={58}>Waifu2X!</Label></WhaleMark>
        <WhaleMark $w={143} $c="#55585c"><i /><Label s={16} w={107}>Remove Backg...</Label></WhaleMark>
        <WhaleMark $w={145} $c="#e8692c"><i /><Label s={16} w={107}>Wolfram|Alpha...</Label></WhaleMark>
        <WhaleMark $w={145} $c="#3a3a3a"><i /><Label s={16} w={92}>공학용 계산기</Label></WhaleMark>
      </WhaleMarks>
      <Article>
        <Heading $mt={58}><Label s={28} w={51}>문제</Label></Heading>
        <Para $mt={29}><Label s={21} w={490}>수열 A가 주어졌을 때, 가장 긴 증가하는 부분 수열을 구하는</Label></Para>
        <Para $mt={11}><Label s={21} w={502}>예를 들어, 수열 A = {"{10, 20, 10, 30, 20, 50}"} 인 경우에 가장</Label></Para>
        <Heading $mt={29}><Label s={28} w={51}>입력</Label></Heading>
        <Para $mt={29}><Label s={21} w={520}>첫째 줄에 수열 A의 크기 N (1 ≤ N ≤ 1,000,000)이 주어진다.</Label></Para>
        <Para $mt={11}><Label s={21} w={496}>둘째 줄에는 수열 A를 이루고 있는 Aᵢ가 주어진다. (1 ≤ Aᵢ ≤</Label></Para>
        <Heading $mt={29}><Label s={28} w={51}>출력</Label></Heading>
        <Para $mt={28}><Label s={21} w={514}>첫째 줄에 수열 A의 가장 긴 증가하는 부분 수열의 길이를 출력</Label></Para>
        <Heading $mt={32}><Label s={28} w={131}>예제 입력 1</Label><Label s={17.500} w={34} c="#4a86bf">복사</Label></Heading>
        <Sample>
          <div>6</div>
          <div>10<mark> </mark>20<mark> </mark>10<mark> </mark>30<mark> </mark>20<mark> </mark>50</div>
        </Sample>
        <Heading $mt={31}><Label s={28} w={51}>출처</Label></Heading>
      </Article>
      <WinTaskbar>
        <TaskIcons>
          {winIcons.map((t, k) => <TaskIcon key={k} $run={t.run} $on={t.on}>{t.i}</TaskIcon>)}
        </TaskIcons>
        <Tray>
          <TrayCell $w={34}><ChevronUp size={20} /></TrayCell>
          <TrayCell $w={36} $c="#cfcf8a"><Mic size={22} strokeWidth={1.800} /></TrayCell>
          <TrayCell $w={40}><Dot $d={19} $c="#fff"><X size={12} color="#222" /></Dot></TrayCell>
          <TrayCell $w={36}><MdWifi size={22} /></TrayCell>
          <TrayCell $w={22}><MdVolumeUp size={21} /></TrayCell>
          <TrayCell $w={38}><svg width="20" height="16" viewBox="0 0 20 16" fill="none" stroke="#e8e8e8" strokeWidth="2"><rect x="4" y="4" width="13" height="10" rx="2" /><path d="M19 7v4M3 0v6" /><path d="M7 7h7v4h-7z" fill="#e8e8e8" /></svg></TrayCell>
          <TrayCell $w={96}><Label s={15.500} w={68}>오전 11:51</Label><Label s={15.500} w={76}>2022-05-15</Label></TrayCell>
          <TrayCell $w={24}><Dot $d={20} $c="#d0c564"><Label s={14}>6</Label></Dot></TrayCell>
        </Tray>
      </WinTaskbar>
      <FlowShadow />
      <FlowWindow>
        <FlowTitle>
          <Label s={15} w={95}>Samsung Flow</Label>
          <FlowWinButtons><Minus size={17} /><Square size={14} /><X size={17} /></FlowWinButtons>
        </FlowTitle>
        <FlowActions>
          <FlowAction><Star size={27} strokeWidth={1.700} /><Label s={13.500} w={52}>즐겨찾기</Label></FlowAction>
          <FlowAction>
            <svg width="26" height="27" viewBox="0 0 26 27" fill="none" stroke="currentColor" strokeWidth="2"><path d="M8 3Q2 7 2 14Q3 21 9 24M17 3Q24 7 24 13Q23 20 18 24M6 2h5v4M20 25h-5v-5" /><rect x="9" y="10" width="8" height="8" rx="2" transform="rotate(40 13 14)" /></svg>
            <Label s={13.500} w={26}>회전</Label>
          </FlowAction>
          <FlowAction><MoveDiagonal size={27} strokeWidth={1.800} /><Label s={13.500} w={55}>전체 화면</Label></FlowAction>
          <FlowAction>
            <svg width="26" height="27" viewBox="0 0 26 27" fill="none" stroke="currentColor" strokeWidth="2"><path d="M2 8V5q0-3 3-3h3M18 2h3q3 0 3 3v3M24 19v3q0 3-3 3h-3M8 25H5q-3 0-3-3v-3" /><rect x="7" y="8" width="12" height="11" rx="2" /><path d="M9 14h8" /></svg>
            <Label s={13.500} w={56}>화면 캡처</Label>
          </FlowAction>
          <FlowAction><Kebab $c="#c4c4c4" $d={4} $gap={6}><i /><i /><i /></Kebab><Label s={13.500} w={42}>더 보기</Label></FlowAction>
        </FlowActions>
        <InkBar>
          <InkCell><Keyboard size={20} strokeWidth={1.800} /></InkCell>
          <InkCell><Dot $d={30} $c="#4e4e4e"><svg width="18" height="18" viewBox="0 0 18 18"><path d="M2 16L4 10L12 2L16 6L8 14Z" fill="#111" stroke="#eee" strokeWidth="1.500" /></svg></Dot></InkCell>
          <InkCell><svg width="18" height="18" viewBox="0 0 18 18"><path d="M1 17L4 10L11 2L17 7L9 14Z" fill="#8f7b35" stroke="#e5dcb9" strokeWidth="1.500" /></svg></InkCell>
          <InkCell><svg width="18" height="18" viewBox="0 0 18 18"><path d="M2 12L11 2L17 7L8 16Z" fill="#f2f2f2" /><path d="M2 12L5 8L11 13L8 16Z" fill="#666" /></svg></InkCell>
          <InkCell><svg width="20" height="18" viewBox="0 0 20 18"><path d="M3 14Q-1 10 5 8Q6 1 10 2Q14 1 15 8Q21 10 17 14Q10 18 3 14Z" fill="none" stroke="#ddd" strokeWidth="1.800" strokeDasharray="3 2" /></svg></InkCell>
          <InkCell $w={19}><InkRule /></InkCell>
          <InkCell $w={48}><Dot $d={30} $c="#000" $border="5px solid #4b4b4b" /></InkCell>
          <InkCell $w={14}><Dot $d={20} $c="#bf4f33" /></InkCell>
          <InkCell $w={42}><Dot $d={20} $c="#1c3fe8" /></InkCell>
          <InkCell $w={60}><InkStroke /></InkCell>
          <InkCell $w={44}><Undo size={19} /></InkCell>
          <InkCell $w={56} $c="#6c6c6c"><Redo size={19} /></InkCell>
          <InkCell $w={48}><svg width="16" height="18" viewBox="0 0 16 18" fill="none" stroke="#8fa5ee" strokeWidth="2"><path d="M2 14Q0 2 8 2Q16 2 14 14Q11 18 10 10H6Q5 18 2 14Z" fill="#1d3bd0" /></svg></InkCell>
          <InkCell $w={54}><svg width="17" height="18" viewBox="0 0 17 18" fill="none" stroke="#ddd" strokeWidth="1.800"><path d="M6 16H2V2H13V6" /><rect x="8" y="10" width="8" height="7" /><path d="M10 10V8q2-2 4 0v2" /></svg></InkCell>
        </InkBar>
        <Canvas>
          <NotePage />
          <CloseBubble><X size={20} strokeWidth={1.800} /></CloseBubble>
          <NotesBubble><svg width="28" height="28" viewBox="0 0 28 28"><path d="M2 1H24Q27 1 27 4V17L18 27H3Q4 24 2 22Q4 20 2 17Q4 15 2 12Q4 9 2 7Q4 4 2 1Z" fill="#fff" /><path d="M18 27V18H27Z" fill="#8a3c17" /></svg></NotesBubble>
        </Canvas>
      </FlowWindow>
      <ShareBar>
        <PauseMark />
        <Label s={16.500} w={340}>meet.google.com에서 내 화면을 공유하는 중입니다.</Label>
        <StopButton><Label s={16} w={61}>공유 중지</Label></StopButton>
        <Label s={16} w={43} c="#8a9ed0">숨기기</Label>
      </ShareBar>
      <Toast>
        <ToastHead>
          <ChromeLogo size={19} />
          <Label s={15.500} w={53}>Chrome</Label>
          <ToastActions><Label s={16} w={16} c="#bbb">···</Label><X size={17} color="#ccc" strokeWidth={1.600} /></ToastActions>
        </ToastHead>
        <ToastBody>
          <ToastLogo><MeetLogo size={36} /></ToastLogo>
          <ToastText>
            <div><Label s={18} w={274}>모든 참여자에게 발표하고 있습니다.</Label></div>
            <div><Label s={18} w={316} c="#bdbdbd">발표를 중지할 준비가 되면 여기를 클릭하</Label></div>
            <div><Label s={18} w={206} c="#bdbdbd">여 화상 통화로 돌아가세요.</Label></div>
            <div><Label s={15} w={113} c="#b5b5b5">meet.google.com</Label></div>
          </ToastText>
        </ToastBody>
      </Toast>
    </Shared>
  );
}

/* dock artwork */
const Plate = ({ fill = "#fff", children, defs }) => (
  <svg width="100" height="100" viewBox="0 0 100 100">
    {defs && <defs>{defs}</defs>}
    <rect width="100" height="100" rx="23" fill={fill} />
    {children}
  </svg>
);
const Grad = ({ id, a, b }) => (
  <linearGradient id={id} x1="0" y1="0" x2="0" y2="1"><stop stopColor={a} /><stop offset="1" stopColor={b} /></linearGradient>
);
const padColors = ["#7be05a", "#f3bd3f", "#e58a37", "#d43c2c", "#9ca3a8", "#e84c60", "#9a45cf", "#37a0ef", "#5ec8a0"];

const dockA = [
  { open: 1, i: (
    <Plate fill="url(#fi)" defs={<><Grad id="fi" a="#5cc4f5" b="#3a72ee" /><Grad id="fi2" a="#f3f3f3" b="#ccd7e6" /></>}>
      <path d="M55 0H77Q100 0 100 23V77Q100 100 77 100H63Q58 84 58 59H43Q42 24 55 0Z" fill="url(#fi2)" />
      <path d="M27 30V37M73 30V37" stroke="#27364d" strokeWidth="4" strokeLinecap="round" /><path d="M20 67Q50 92 80 67" stroke="#1e2b40" strokeWidth="3.500" fill="none" strokeLinecap="round" />
    </Plate>) },
  { i: <Plate fill="#d2c8ee">{padColors.map((c, k) => <rect key={c} x={16 + (k % 3) * 25} y={17 + Math.floor(k / 3) * 24.500} width="19" height="18.500" rx="5" fill={c} />)}</Plate> },
  { i: (
    <Plate fill="url(#ma)" defs={<><Grad id="ma" a="#3b70ea" b="#5bc3f8" /><Grad id="ma2" a="#fbfbfb" b="#dedede" /></>}>
      <rect x="15" y="28" width="70" height="45" rx="4" fill="url(#ma2)" /><path d="M17 30L44 56Q50 62 56 56L83 30M17 71L38 50M83 71L62 50" stroke="#b9b9b9" strokeWidth="1.800" fill="none" />
    </Plate>) },
  { i: (
    <Plate fill="url(#ca)" defs={<Grad id="ca" a="#fff" b="#f2f2ef" />}>
      <path d="M0 31V23Q0 0 23 0H77Q100 0 100 23V31Z" fill="#e2635a" />
      <text x="50" y="24" textAnchor="middle" fontSize="19" fontWeight="600" fill="#fff" fontFamily={MAC}>5월</text>
      <text x="50" y="85" textAnchor="middle" fontSize="61" fontWeight="300" fill="#222" textLength="62" fontFamily={MAC}>15</text>
    </Plate>) },
  { open: 1, i: (
    <Plate fill="url(#no)" defs={<><Grad id="no" a="#fff" b="#e6e4de" /><Grad id="no2" a="#fbdd75" b="#f5c53a" /></>}>
      <path d="M0 26V23Q0 0 23 0H77Q100 0 100 23V26Z" fill="url(#no2)" /><path d="M0 26.500H100" stroke="#b9b3a2" strokeWidth="2" /><path d="M2 30H98" stroke="#aaa" strokeWidth="3" strokeDasharray="1.500 2.500" /><path d="M0 50H100M0 75H100" stroke="#d3d1cd" strokeWidth="2" />
    </Plate>) },
  { open: 1, i: (
    <Plate fill="url(#pg)" defs={<Grad id="pg" a="#fff" b="#e9e9ea" />}>
      <path d="M23 27.500H76M23 42.500H70M23 58H66" stroke="#5dbaee" strokeWidth="3.500" /><path d="M23 75q6 4 11-2t8 1t6 2t8-2" stroke="#56c6ee" strokeWidth="3" fill="none" />
      <path d="M88 7Q92 2 96 8Q101 18 99 30L66 73Q61 77 62 72L86 17Z" fill="#2b2b2d" /><path d="M87 16L99 27" stroke="#ddd" strokeWidth="2.500" />
    </Plate>) },
  { i: (
    <Plate fill="url(#as)" defs={<Grad id="as" a="#50b3ee" b="#2b60da" />}>
      <g stroke="#fff" strokeWidth="9" strokeLinecap="round"><path d="M59 23L34 64M29 73L26 77M42 23L75 77M19 61H52M68 61H80" /></g>
    </Plate>) },
  { open: 1, i: <Plate fill="#f7f6fc"><g transform="translate(7 7)"><ChromeLogo size={86} /></g></Plate> },
  { badge: "1", i: (
    <Plate fill="url(#se)" defs={<Grad id="se" a="#cfdbe0" b="#8c8c8c" />}>
      <circle cx="50" cy="50" r="43" fill="#2f2f31" /><circle cx="50" cy="50" r="38" fill="none" stroke="#8f9394" strokeWidth="6" strokeDasharray="2.500 2.500" /><circle cx="50" cy="50" r="31" fill="none" stroke="#b6babb" strokeWidth="5" /><circle cx="50" cy="50" r="22" fill="none" stroke="#76797a" strokeWidth="6" strokeDasharray="2 2" />
      <path d="M50 50H82M50 50L34 22M50 50L34 78" stroke="#b9bdbe" strokeWidth="5" /><circle cx="50" cy="50" r="8" fill="#c9cccd" /><circle cx="50" cy="50" r="3" fill="#333" />
    </Plate>) },
  { open: 1, badge: "2", i: (
    <svg width="100" height="100" viewBox="0 0 100 100"><rect x="-2" y="-2" width="104" height="104" rx="24" fill="#f9e449" /><ellipse cx="50" cy="47" rx="41" ry="32" fill="#371d1e" /><path d="M26 66L27 89Q28 92 31 89L45 74Z" fill="#371d1e" /><text x="50" y="58" textAnchor="middle" fontSize="27" fontWeight="700" textLength="60" lengthAdjust="spacingAndGlyphs" fill="#f9e449" fontFamily="Inter">TALK</text></svg>) },
  { i: <svg width="100" height="100" viewBox="0 0 100 100"><rect x="-2" y="-2" width="104" height="104" rx="24" fill="#fff" /><circle cx="48" cy="58" r="18.500" fill="none" stroke="#6de052" strokeWidth="15" /><circle cx="74" cy="23" r="9.500" fill="#6de052" /></svg> },
  { open: 1, i: (
    <Plate fill="#d8c368" defs={<Grad id="st" a="#fcf3a6" b="#eee09a" />}>
      <path d="M0 23Q0 0 23 0H77Q100 0 100 23V52Q92 84 66 88L24 90Q0 90 0 67Z" fill="url(#st)" /><path d="M17 33Q20 12 24 17Q24 30 27 28Q30 18 34 24T40 31Q44 27 50 33T60 30H83" stroke="#d8c36c" strokeWidth="4" fill="none" /><path d="M16 48.500H84M16 66H52" stroke="#d8c36c" strokeWidth="6" />
    </Plate>) },
  { open: 1, i: (
    <Plate><path d="M14 38L20 33Q22 32 24 34L84 80L67 86Z" fill="#3273c0" /><path d="M14 60L20 67Q22 68 24 66L84 20L67 15Z" fill="#27609f" /><path d="M67 15L84 23V78L67 86Z" fill="#4796e6" /><path d="M67 34V66L47 50Z" fill="#fff" /></Plate>) },
  { mr: 46, i: (
    <Plate fill="#b9c2c4"><rect x="1" y="3" width="98" height="94" rx="22" fill="#0a0a0a" /><rect x="9" y="10" width="80" height="79" rx="15" fill="#171c20" /><text x="15" y="34" fontSize="22" fontWeight="700" fill="#5fd73f" fontFamily="'Liberation Mono', monospace">$</text><rect x="31" y="16" width="11" height="21" fill="#2c6a20" /></Plate>) },
];
const dockB = [
  { open: 1, mr: 34, i: (
    <Plate><rect x="27" y="16" width="57" height="68" rx="4" fill="#2b5ebd" /><path d="M27 33V20q0-4 4-4H80q4 0 4 4V33Z" fill="#5aa3e8" /><path d="M27 33H84V50H27Z" fill="#4079cc" /><path d="M27 67H84V80q0 4-4 4H31q-4 0-4-4Z" fill="#1f3f88" /><rect x="9" y="31" width="38" height="38" rx="4" fill="#2453ae" /><text x="28" y="60" textAnchor="middle" fontSize="28" fontWeight="700" fill="#fff" fontFamily="Open Sans">W</text></Plate>) },
  { open: 1, badge: "74", mr: 33, i: (
    <Plate fill="url(#me)" defs={<><Grad id="me" a="#86ee80" b="#54b947" /><Grad id="me2" a="#fff" b="#cfe9cb" /></>}><ellipse cx="51" cy="47" rx="37" ry="30" fill="url(#me2)" /><path d="M32 70Q33 78 27 83Q38 81 44 75Z" fill="#d5ebd2" /></Plate>) },
  { mr: 46, i: (
    <Plate fill="url(#ft)" defs={<><Grad id="ft" a="#80e879" b="#4fb643" /><Grad id="ft2" a="#fff" b="#c9e5c6" /></>}><rect x="15" y="28" width="50" height="44" rx="12" fill="url(#ft2)" /><path d="M67 44L80 32Q85 28 85 34V66Q85 72 80 68L67 56Z" fill="url(#ft2)" /></Plate>) },
];
const thumbColors = ["#6e2f2b", "#2b3340", "#b89a5a", "#1e2033", "#a4aab4", "#1d3a52", "#3a3f2f", "#b9a05a", "#c9b89a", "#b3202a", "#26303a", "#d6b9a0"];

function DockBar() {
  const render = (d, k) => (
    <DockItem key={k} $open={d.open} $mr={d.mr}>
      {d.i}
      {d.badge && <DockBadge><Label s={27}>{d.badge}</Label></DockBadge>}
    </DockItem>
  );
  return (
    <Dock>
      {dockA.map(render)}
      <DockRule $mr={43} />
      {dockB.map(render)}
      <DockRule $mr={0} />
      <Thumb>
        <svg width="117" height="90" viewBox="0 0 117 90">
          <rect width="117" height="64" fill="#f5f5f6" /><path d="M0 3H117" stroke="#c9736b" strokeWidth="1.500" strokeDasharray="5 3" /><path d="M4 7.500H70" stroke="#aaa" strokeDasharray="4 2" />
          <rect y="10" width="117" height="45" fill="#0c0c0e" />
          {thumbColors.map((c, k) => <rect key={k} x={16 + (k % 4) * 21} y={14 + Math.floor(k / 4) * 12} width="20" height="11" fill={c} />)}
          {thumbColors.map((c, k) => <circle key={c} cx={22 + (k % 4) * 21 + (k % 3) * 3} cy={19 + Math.floor(k / 4) * 12} r="3" fill={k % 2 ? "#d9b08c" : "#efe6da"} opacity=".75" />)}
          <path d="M16 58H28M50 58H112M72 62H90" stroke="#999" strokeWidth="2" strokeDasharray="6 3" />
          <rect x="76" y="51" width="37" height="37" rx="9" fill="#f4f2fb" /><g transform="translate(79 54)"><ChromeLogo size={31} /></g>
        </svg>
      </Thumb>
      <svg width="88" height="116" viewBox="0 0 88 116" overflow="visible">
        <defs><Grad id="tr" a="#e4e4ea" b="#cfcfd6" /></defs>
        <g transform="translate(0 -10)">
          <path d="M5 14L14 8L22 4L30 -1L34 4L46 8L54 0L62 10L76 7L84 16L76 26H12Z" fill="#ececec" />
          <path d="M16 10L26 22M34 4L30 18L40 26M54 2L50 20L66 24M62 10L74 22M20 20L32 12" stroke="#5b5b60" strokeWidth="3.500" fill="none" /><path d="M30 12h9v6h-9z" fill="#5ab0c8" /><path d="M60 14l8 3-4 6z" fill="#7c3f3f" />
          <path d="M2 18Q44 34 86 18L76 106Q74 115 62 115H26Q14 115 12 106Z" fill="url(#tr)" fillOpacity=".96" />
          <path d="M2 16Q44 32 86 16" stroke="#f6f6fa" strokeWidth="3" fill="none" />
          <path d="M20 40L34 64L26 100M62 34L52 70L64 96M40 44L46 90" stroke="#f4f4f7" strokeWidth="5" fill="none" opacity=".4" />
        </g>
      </svg>
    </Dock>
  );
}

const people = [
  { initials: "치산", name: "안치산", nw: 73, c: "#7a5ab9", halo: true, ring: 186, rc: "#646567", speaking: true },
  { initials: "진영", name: "이진영", nw: 73, c: "#4a2fa0", ring: 150, rc: "transparent", muted: true },
  { initials: "문", name: "최문", nw: 49, c: "#7f919d", ring: 150, rc: "transparent" },
  { initials: "혜림", name: "나", nw: 25, c: "#9d4db5", ring: 174, rc: "#4b4c4f" },
];

export default function App() {
  return (
    <Desktop>
      <Global />
      <MenuBar>
        <MenuLeft>
          <FaApple size={32} />
          <Label s={25.500} b={700} w={82}>Finder</Label>
          <Label s={24.500} w={45}>파일</Label>
          <Label s={24.500} w={44}>편집</Label>
          <Label s={24.500} w={45}>보기</Label>
          <Label s={24.500} w={44}>이동</Label>
          <Label s={24.500} w={68}>윈도우</Label>
          <Label s={24.500} w={67}>도움말</Label>
        </MenuLeft>
        <MenuRight>
          <StatusCell $w={66}><svg width="36" height="32" viewBox="0 0 36 32"><path d="M16 0Q31 0 31 14Q30 27 14 27L3 31L6 24Q0 20 1 12Q3 0 16 0Z" fill="#1d181d" /><circle cx="26" cy="21" r="10.500" fill="#e86a55" /><path d="M23 25V17L29 25V17" stroke="#fff" strokeWidth="2" fill="none" /></svg></StatusCell>
          <StatusCell $w={66}><svg width="28" height="32" viewBox="0 0 28 32" fill="none" stroke="#241c24" strokeWidth="4"><path d="M17 28Q8 31 5 22Q3 16 3 5q0-3 3-3H22q3 0 3 3V20Q24 28 17 28" /><path d="M18 12h9v8h-9z" fill="#241c24" stroke="none" /><circle cx="22" cy="16" r="1.500" fill="#fff" stroke="none" /></svg></StatusCell>
          <StatusCell $w={62}><Monitor size={34} strokeWidth={1.700} /></StatusCell>
          <StatusCell $w={70}><svg width="28" height="28" viewBox="0 0 28 28"><circle cx="14" cy="14" r="12" fill="none" stroke="#3a303a" strokeWidth="2.500" /><path d="M11 8V20L20 14Z" fill="#3a303a" /></svg></StatusCell>
          <StatusCell $w={68}><svg width="34" height="22" viewBox="0 0 34 22" fill="#3a303a"><circle cx="17" cy="2.500" r="2.200" /><circle cx="8" cy="8" r="2.200" /><circle cx="26" cy="8" r="2.200" /><circle cx="3" cy="18" r="2" /><circle cx="31" cy="18" r="2" /><rect x="10" y="16" width="14" height="4" rx="2" /></svg></StatusCell>
          <StatusCell $w={68}><svg width="30" height="30" viewBox="0 0 30 30" fill="none" stroke="#c2aec6" strokeWidth="2.200"><path d="M8 26A13 13 0 1 1 22 26M10 21A8.500 8.500 0 1 1 20 21M12.500 17A4 4 0 1 1 17.500 17" /><circle cx="15" cy="14" r="2" fill="#c2aec6" /><path d="M15 17v9" strokeWidth="3.500" /></svg></StatusCell>
          <StatusCell $w={72}><MdWifi size={37} /></StatusCell>
          <StatusCell $w={76}><InputSource><Label s={23} b={500}>한</Label></InputSource></StatusCell>
          <StatusCell $w={82}><svg width="52" height="26" viewBox="0 0 52 26"><rect x="1.500" y="1.500" width="44" height="22" rx="6" fill="none" stroke="#8c7c8e" strokeWidth="2" /><rect x="5" y="5" width="28" height="15" rx="3" fill="#1f181f" /><path d="M48 9q4 3.500 0 7z" fill="#8c7c8e" /></svg></StatusCell>
          <StatusCell $w={66}><Search size={29} strokeWidth={2.300} /></StatusCell>
          <StatusCell $w={46}><svg width="30" height="30" viewBox="0 0 30 30" fill="none" stroke="#3a303a" strokeWidth="2.200"><rect x="2" y="1.500" width="26" height="11" rx="5.500" /><circle cx="7.500" cy="7" r="3" fill="#3a303a" /><rect x="2" y="17" width="26" height="11.500" rx="5.500" fill="#3a303a" /><circle cx="23" cy="22.700" r="3" fill="#fff" stroke="none" /></svg></StatusCell>
          <StatusCell $w={35} $pr={24}><Dot $d={10} $c="#eba24f" /></StatusCell>
          <Label s={25} w={286}>5월 15일 (일) 오전  11:51</Label>
        </MenuRight>
      </MenuBar>
      <Notes>
        <Note $c="#eeeeee"><Label s={17.500} w={152}>1. 스터디 발표 준비...</Label></Note>
        <Note $c="#f6c8c8"><Label s={17.500} w={66}>TODO...</Label></Note>
      </Notes>

      <BrowserWindow>
        <TabStrip>
          <Lights><i /><i /><i /></Lights>
          <Tab $active>
            <MeetLogo size={32} />
            <TabTitle $gap={16}><Label s={24} w={241}>Meet - tgm-zrop-mte</Label></TabTitle>
            <RecordDot />
            <TabClose $last><X size={25} strokeWidth={2.600} /></TabClose>
          </Tab>
          <Tab>
            <VelogTile>v</VelogTile>
            <TabTitle $fade><Label s={24} w={360}>[알고리즘] 이진탐색(Binary Search)</Label></TabTitle>
            <TabClose><X size={25} strokeWidth={2.600} /></TabClose><TabRule />
          </Tab>
          <Tab>
            <CodeMark size={32} />
            <TabTitle><Label s={24} w={157}>1920번: 수 찾기</Label></TabTitle>
            <TabClose><X size={25} strokeWidth={2.600} /></TabClose><TabRule />
          </Tab>
          <Tab>
            <CodeMark size={32} />
            <TabTitle><Label s={24} w={232}>43317654번 소스 코드</Label></TabTitle>
            <TabClose><X size={25} strokeWidth={2.600} /></TabClose><TabRule />
          </Tab>
          <Tab>
            <VelogTile>v</VelogTile>
            <TabTitle $fade><Label s={24} w={368}>mac 환경 vscode 에서 C언어 개발환</Label></TabTitle>
            <TabClose><X size={25} strokeWidth={2.600} /></TabClose><TabRule />
          </Tab>
          <TabTools><Plus size={34} strokeWidth={2.300} /><ChevronDown size={28} /></TabTools>
        </TabStrip>

        <ToolbarRow>
          <NavButtons><ArrowLeft size={34} /><ArrowRight size={34} /><RotateCw size={31} strokeWidth={2.400} /></NavButtons>
          <Omnibox>
            <MdLock size={27} />
            <Url><Label s={28} w={230} c="#202124">meet.google.com</Label><Label s={28} w={194}>/tgm-zrop-mte</Label></Url>
            <OmniIcons><MdVideocam size={34} /><Share size={29} /><Star size={31} /></OmniIcons>
          </Omnibox>
          <Extensions>
            <ExtTile $c="#626364"><ExtCaret /></ExtTile>
            <ExtTile $c="#dd7636" $r={6}><Label s={19} b={700}>EX</Label></ExtTile>
            <MdExtension size={33} color="#babcbe" />
            <SidePanel />
            <Profile><Label s={19} w={36}>혜림</Label></Profile>
          </Extensions>
          <UpdateButton><Label s={24.500} w={90}>업데이트</Label><Kebab $c="#c33b2f" $d={6} $gap={5} $pr={8}><i /><i /><i /></Kebab></UpdateButton>
        </ToolbarRow>

        <BookmarkBar>
          {bookmarks.map((m) => (
            <Bookmark key={m.t} $w={m.p} $gap={m.g}>{m.i}<Label s={23} w={m.w}>{m.t}</Label></Bookmark>
          ))}
          <Label s={26}>»</Label>
        </BookmarkBar>

        <Meet>
          <Banner>
            <SmallAvatar><Label s={19}>문</Label></SmallAvatar>
            <Label s={27} w={268}>최문님이 발표 중입니다.</Label>
          </Banner>
          <Stage>
            <Presentation><SharedScreen /></Presentation>
            <People>
              {people.map((p) => (
                <PersonTile key={p.name} $speaking={p.speaking}>
                  <Halo $fill={p.halo}>
                    <Ring $d={p.ring} $c={p.rc}>
                      <Avatar $c={p.c}><Label s={56}>{p.initials}</Label></Avatar>
                    </Ring>
                  </Halo>
                  <PersonName><Label s={26.500} w={p.nw}>{p.name}</Label></PersonName>
                  {p.speaking && <CornerBadge $c="#396bd0"><Bar $h={12} /><Bar $h={26} /><Bar $h={12} /></CornerBadge>}
                  {p.muted && <CornerBadge $c="#303134"><MdMicOff size={34} /></CornerBadge>}
                </PersonTile>
              ))}
            </People>
          </Stage>
          <ControlBar>
            <CallTitle>
              <Label s={29.500} w={131}>11:51 오전</Label><i /><Label s={32.500} w={217}>tgm-zrop-mte</Label>
            </CallTitle>
            <Controls>
              <RoundButton><MdMic size={42} /></RoundButton>
              <RoundButton $danger><MdOutlineVideocamOff size={42} /></RoundButton>
              <RoundButton>
                <svg width="44" height="36" viewBox="0 0 44 36" fill="none" stroke="#fff" strokeWidth="4"><rect x="2" y="2" width="40" height="32" rx="3" /><path d="M22 27V13" /><path d="M15 18L22 10L29 18Z" fill="#fff" stroke="none" /></svg>
              </RoundButton>
              <RoundButton><MdMoreVert size={48} /></RoundButton>
              <RoundButton $danger $wide><MdCallEnd size={50} /></RoundButton>
            </Controls>
            <PanelButtons>
              <PanelButton><MdInfoOutline size={48} /></PanelButton>
              <PanelButton><MdOutlinePeopleAlt size={48} /><CountBadge><Label s={24}>5</Label></CountBadge></PanelButton>
              <PanelButton><MdOutlineChat size={48} /></PanelButton>
              <PanelButton><MdOutlineCategory size={48} /></PanelButton>
            </PanelButtons>
          </ControlBar>
        </Meet>
      </BrowserWindow>
      <DockBar />
    </Desktop>
  );
}
